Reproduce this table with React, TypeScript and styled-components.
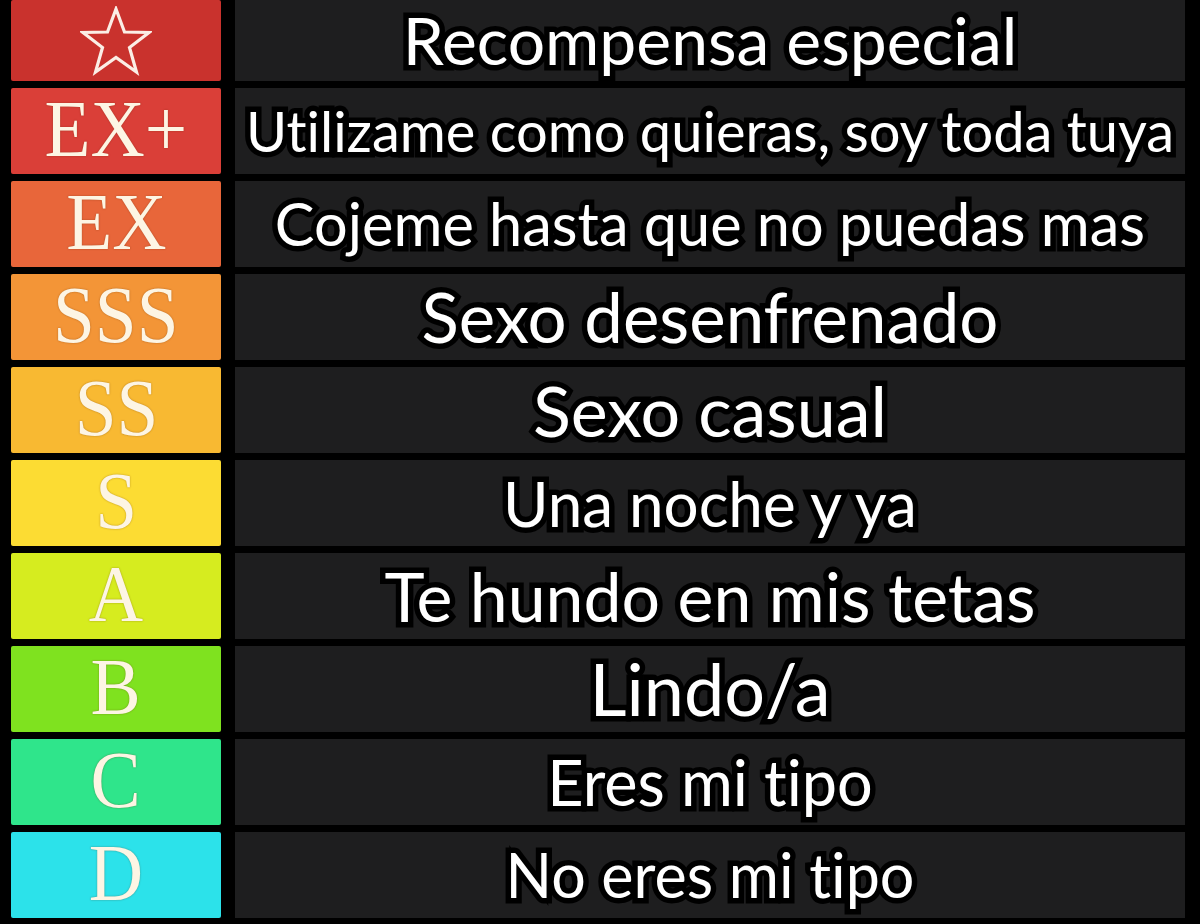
import styled, { createGlobalStyle } from "styled-components";

interface Tier {
  label: string;
  color: string;
  text: string;
  size: number;
}

const tiers: Tier[] = [
  { label: "star", color: "#c9322d", text: "Recompensa especial", size: 66 },
  { label: "EX+", color: "#da3f38", text: "Utilizame como quieras, soy toda tuya", size: 56 },
  { label: "EX", color: "#e8663a", text: "Cojeme hasta que no puedas mas", size: 59.5 },
  { label: "SSS", color: "#f39537", text: "Sexo desenfrenado", size: 69 },
  { label: "SS", color: "#f8b932", text: "Sexo casual", size: 70 },
  { label: "S", color: "#fcdc33", text: "Una noche y ya", size: 62 },
  { label: "A", color: "#d6ec1f", text: "Te hundo en mis tetas", size: 68 },
  { label: "B", color: "#7fe21f", text: "Lindo/a", size: 72 },
  { label: "C", color: "#2fe58b", text: "Eres mi tipo", size: 63 },
  { label: "D", color: "#2ce2ea", text: "No eres mi tipo", size: 61 },
];

const StarIcon = ({ fill }: { fill: string }) => (
  <svg width="72" height="70" viewBox="0 0 72 70">
    <polygon
      points="36,3 44.5,26 69,26.5 49.5,41.5 56.5,66 36,51.5 15.5,66 22.5,41.5 3,26.5 27.5,26"
      fill={fill}
      stroke="#fbeee6"
      strokeWidth="3.2"
      strokeLinejoin="miter"
    />
  </svg>
);

const App = () => {
  return (
    <>
      <GlobalStyle />
      <Board>
        {tiers.map((tier) => (
          <Row key={tier.label} $first={tier.label === "star"}>
            <Label $color={tier.color}>
              {tier.label === "star" ? (
                <StarIcon fill={tier.color} />
              ) : (
                <LabelText>{tier.label}</LabelText>
              )}
            </Label>
            <Cell>
              <Caption $size={tier.size}>{tier.text}</Caption>
            </Cell>
          </Row>
        ))}
      </Board>
    </>
  );
};

const GlobalStyle = createGlobalStyle`
  html, body {
    margin: 0;
    padding: 0;
    background: #000;
    overflow: hidden;
  }
`;

const Board = styled.div`
  width: 1200px;
  height: 924px;
  background: #000;
  display: flex;
  flex-direction: column;
  gap: 7px;
  padding: 0 15px 0 11px;
  box-sizing: border-box;
`;

const Row = styled.div<{ $first: boolean }>`
  display: grid;
  grid-template-columns: 210px 1fr;
  gap: 14px;
  height: ${({ $first }) => ($first ? "81px" : "86px")};
`;

const Label = styled.div<{ $color: string }>`
  background: ${({ $color }) => $color};
  border-radius: 2px;
  display: flex;
  align-items: center;
  justify-content: center;
`;

const LabelText = styled.span`
  font-family: "Liberation Serif", "Times New Roman", serif;
  font-size: 80px;
  line-height: 80px;
  color: #fdf5e4;
  transform: scaleX(0.94) translateY(-2px);
  text-shadow: 0 0 2px rgba(90, 40, 0, 0.45);
  white-space: nowrap;
`;

const Cell = styled.div`
  background: #1e1e1f;
  display: flex;
  align-items: center;
  justify-content: center;
`;

const Caption = styled.span<{ $size: number }>`
  font-family: Lato, "Open Sans", sans-serif;
  font-size: ${({ $size }) => $size}px;
  font-variant-ligatures: none;
  line-height: 1.1;
  color: #fff;
  white-space: nowrap;
  -webkit-text-stroke: 11px #000;
  paint-order: stroke fill;
`;

export default App;
